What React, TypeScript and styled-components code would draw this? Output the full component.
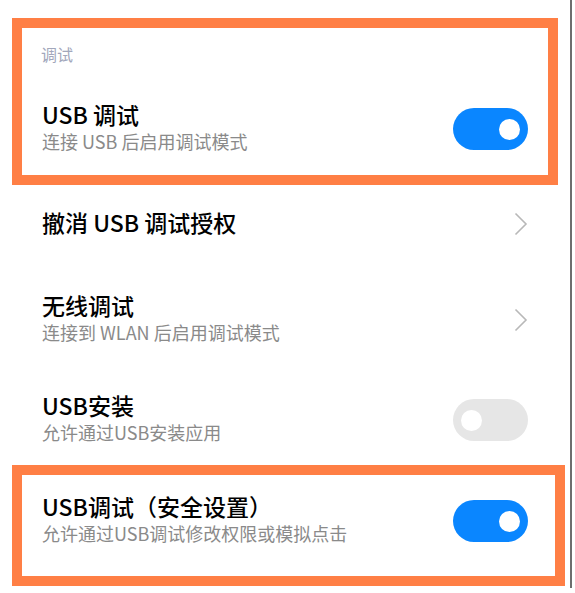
import React from "react";
import styled, { createGlobalStyle } from "styled-components";

const GlobalStyle = createGlobalStyle`
  html, body {
    margin: 0;
    padding: 0;
    background: #ffffff;
  }
  body {
    font-family: "Noto Sans CJK SC", "Noto Sans", sans-serif;
  }
`;

const Screen = styled.div`
  position: relative;
  width: 575px;
  height: 593px;
  background: #ffffff;
  overflow: hidden;
`;

const List = styled.div`
  width: 572px;
  height: 588px;
  box-sizing: border-box;
  border-right: 2px solid #6e6e6e;
  display: flex;
  flex-direction: column;
`;

const SectionHeader = styled.div`
  padding: 43px 0 16px 41px;
  font-size: 16px;
  line-height: 22px;
  color: #a2a7bb;
`;

const Row = styled.div<{ $h: number }>`
  height: ${({ $h }) => $h}px;
  display: flex;
  align-items: center;
  justify-content: space-between;
  padding: 0 42px 0 42px;
`;

const TextBlock = styled.div`
  display: flex;
  flex-direction: column;
  padding-bottom: 4px;
`;

const Title = styled.div`
  font-size: 23px;
  line-height: 28px;
  font-weight: 500;
  color: #000000;
`;

const Subtitle = styled.div`
  font-size: 18px;
  line-height: 26px;
  color: #8a8a8a;
`;

const Track = styled.div<{ $on: boolean }>`
  width: 75px;
  height: 42px;
  border-radius: 21px;
  background: ${({ $on }) => ($on ? "#0a86ff" : "#e6e6e6")};
  display: flex;
  align-items: center;
  justify-content: ${({ $on }) => ($on ? "flex-end" : "flex-start")};
  padding: 0 8px;
  box-sizing: border-box;
  flex-shrink: 0;
`;

const Knob = styled.div`
  width: 21px;
  height: 21px;
  border-radius: 50%;
  background: #ffffff;
`;

const Highlight = styled.div<{ $top: number; $width: number; $height: number }>`
  position: absolute;
  left: 12px;
  top: ${({ $top }) => $top}px;
  width: ${({ $width }) => $width}px;
  height: ${({ $height }) => $height}px;
  box-sizing: border-box;
  border: 10px solid #ff7f45;
  pointer-events: none;
`;

const Chevron = () => (
  <svg width="14" height="24" viewBox="0 0 14 24" fill="none">
    <path d="M1.5 1.5 L12 12 L1.5 22.5" stroke="#b8b8b8" strokeWidth="1.6" />
  </svg>
);

const Switch = ({ on }: { on: boolean }) => (
  <Track $on={on}>
    <Knob />
  </Track>
);

export default function App() {
  return (
    <>
      <GlobalStyle />
      <Screen>
        <List>
          <SectionHeader>调试</SectionHeader>
          <Row $h={96}>
            <TextBlock>
              <Title>USB 调试</Title>
              <Subtitle>连接 USB 后启用调试模式</Subtitle>
            </TextBlock>
            <Switch on />
          </Row>
          <Row $h={94}>
            <TextBlock>
              <Title>撤消 USB 调试授权</Title>
            </TextBlock>
            <Chevron />
          </Row>
          <Row $h={98}>
            <TextBlock>
              <Title>无线调试</Title>
              <Subtitle>连接到 WLAN 后启用调试模式</Subtitle>
            </TextBlock>
            <Chevron />
          </Row>
          <Row $h={102}>
            <TextBlock>
              <Title>USB安装</Title>
              <Subtitle>允许通过USB安装应用</Subtitle>
            </TextBlock>
            <Switch on={false} />
          </Row>
          <Row $h={100}>
            <TextBlock>
              <Title>USB调试（安全设置）</Title>
              <Subtitle>允许通过USB调试修改权限或模拟点击</Subtitle>
            </TextBlock>
            <Switch on />
          </Row>
        </List>
        <Highlight $top={18} $width={546} $height={167} />
        <Highlight $top={465} $width={553} $height={121} />
      </Screen>
    </>
  );
}
